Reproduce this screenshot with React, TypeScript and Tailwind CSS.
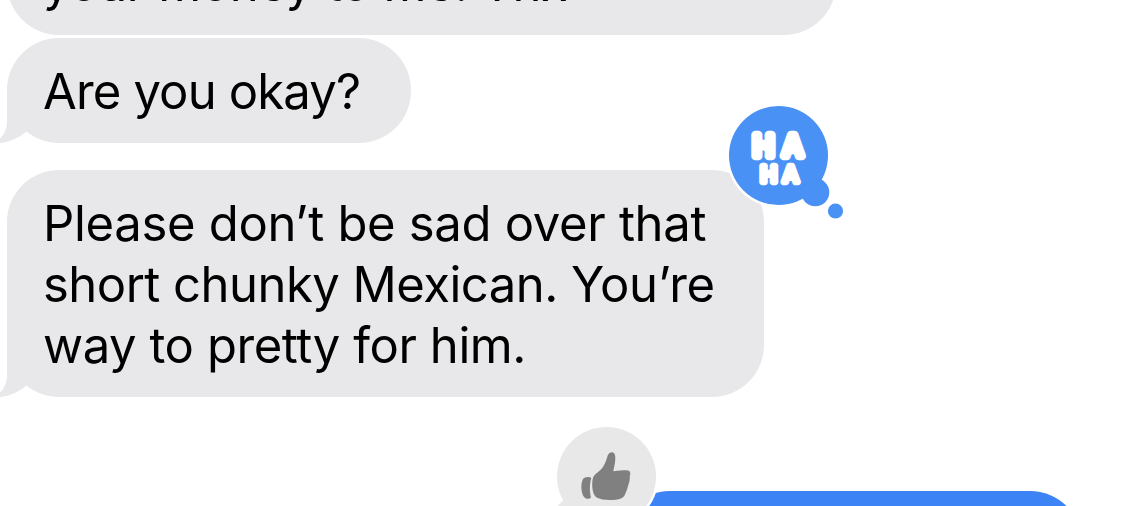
import type { ReactNode } from "react";

function Tail() {
  return (
    <svg
      className="absolute -left-[7px] bottom-0"
      width="36"
      height="56"
      viewBox="0 0 36 56"
    >
      <path d="M7 0V33C7 41 5 47 0 51.5V56C10 55 19 51 27 44L36 34V0Z" fill="#e8e8ea" />
    </svg>
  );
}

function Received({
  children,
  tail = false,
  className,
}: {
  children: ReactNode;
  tail?: boolean;
  className: string;
}) {
  return (
    <div
      className={`relative ml-[7px] shrink-0 rounded-[52px] bg-[#e8e8ea] pt-[23px] pb-[21px] pl-9 ${className}`}
    >
      {tail && <Tail />}
      <div className="relative flex flex-col items-start">{children}</div>
    </div>
  );
}

function HaHa() {
  return (
    <svg
      className="absolute -top-[90px] left-[683px]"
      width="120"
      height="120"
      viewBox="0 0 120 120"
    >
      <circle cx="52.5" cy="52.5" r="52" fill="#fff" />
      <g fill="#4a91f5">
        <circle cx="52.5" cy="52.5" r="49.5" />
        <circle cx="89.3" cy="89.3" r="14" />
        <circle cx="109.5" cy="108" r="7.6" />
      </g>
      <g
        fill="#fff"
        stroke="#fff"
        strokeLinejoin="round"
        fontFamily="Inter, sans-serif"
        fontWeight="400"
      >
        <text x="27 57" y="53" fontSize="28" strokeWidth="8.5">
          HA
        </text>
        <text x="34.5 57" y="78.5" fontSize="22" strokeWidth="6.5">
          HA
        </text>
      </g>
    </svg>
  );
}

function ThumbsUp() {
  return (
    <svg
      className="absolute -left-[65px] -top-[67px]"
      width="110"
      height="110"
      viewBox="0 0 110 110"
    >
      <circle cx="53.5" cy="52.5" r="52" fill="#fff" />
      <g fill="#e8e8e8">
        <circle cx="53.5" cy="52.5" r="49.5" />
        <circle cx="16.7" cy="89.3" r="14" />
      </g>
      <g fill="#808080">
        <path d="M38.3 54C37 52.3 31.5 52.5 30 55C27.5 60 28 69 31 73C33 75.500 36.5 75 38 73.5C36.5 68 36.5 60 38.3 54Z" />
        <path d="M54.3 32.7C55.5 27 62 26.5 62.3 32.7C62.6 38 61 43 60.3 47.3C65 46.3 70 46.3 73.7 46.3C77 46.5 78.2 49 76.8 52C77 55 76.500 58 75.3 61C74.500 64 74 66 73 68C72 71.500 70.500 73.500 68 74.500C61 76.800 49 76.5 43.5 73.5C38.5 70 38.5 57 40.3 53C42.500 49 48 47 50.5 42C52.5 38.5 53.5 36 54.3 32.7Z" />
      </g>
    </svg>
  );
}

export default function App() {
  return (
    <div className="flex h-[506px] w-[1126px] flex-col overflow-hidden bg-white font-[Inter,sans-serif] text-[49px] leading-[61px] whitespace-nowrap text-black">
      <div className="flex h-[35px] shrink-0 items-end overflow-hidden">
        <Received className="w-[829px]">
          <span className="tracking-[-0.4px]">your money to me. Thx</span>
        </Received>
      </div>

      <Received tail className="mt-[3px] w-[404px]">
        <span className="tracking-[-0.85px]">Are you okay?</span>
      </Received>

      <Received tail className="mt-[27px] w-[757px]">
        <span className="tracking-[-0.32px]">Please don’t be sad over that</span>
        <span className="tracking-[-0.52px]">short chunky Mexican. You’re</span>
        <span className="tracking-[-0.43px]">way to pretty for him.</span>
        <HaHa />
      </Received>

      <div className="relative mt-[94px] ml-[618px] h-[105px] w-[464px] shrink-0 rounded-[52px] bg-[#3c83f6]">
        <ThumbsUp />
      </div>
    </div>
  );
}
